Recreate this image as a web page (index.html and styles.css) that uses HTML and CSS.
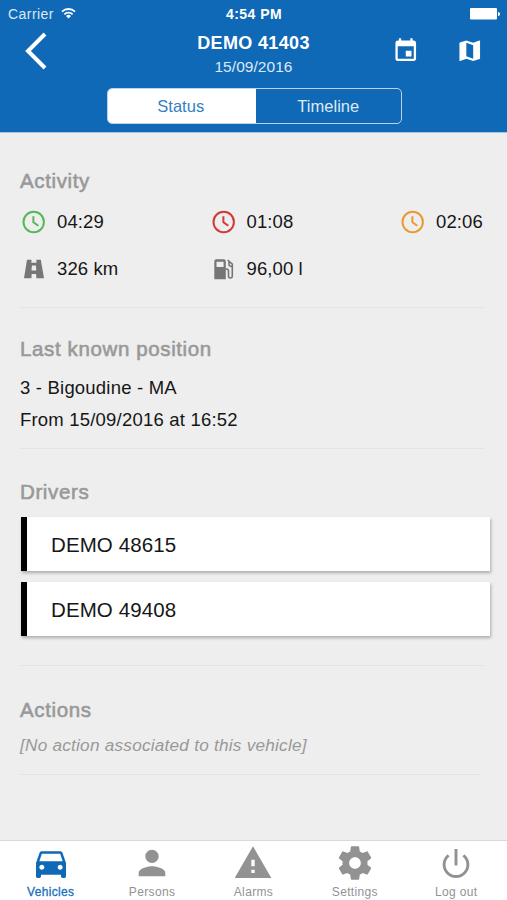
FILE: index.html
```html
<!DOCTYPE html>
<html lang="en">
<head>
<meta charset="utf-8">
<title>Vehicle status</title>
<link rel="stylesheet" href="styles.css">
</head>
<body>
<div class="app">
  <header class="header">
    <div class="statusbar">
      <span class="carrier">Carrier
        <svg class="wifi" viewBox="0 0 16 12"><g fill="none" stroke="#fff" stroke-width="1.9"><path d="M1 4.6a10 10 0 0 1 14 0"/><path d="M3.6 7.4a6.2 6.2 0 0 1 8.8 0"/></g><path fill="#fff" d="M8 11.8 5.3 9.1a3.8 3.8 0 0 1 5.4 0z"/></svg>
      </span>
      <span class="clock">4:54 PM</span>
      <span class="battery"><svg viewBox="0 0 30 12"><rect width="27" height="11.5" rx="1" fill="#fff"/><path fill="#fff" d="M28 4a2 2 0 0 1 0 4z"/></svg></span>
    </div>
    <div class="titlebar">
      <svg class="back" viewBox="0 0 24 38"><path d="M21 2 4 19l17 17" fill="none" stroke="#fff" stroke-width="4"/></svg>
      <div class="titles">
        <h1 class="title">DEMO 41403</h1>
        <div class="date">15/09/2016</div>
      </div>
      <div class="tools">
        <svg viewBox="0 0 24 24"><path d="M17 12h-5v5h5v-5zM16 1v2H8V1H6v2H5c-1.110 0-1.990.9-1.990 2L3 19c0 1.100.89 2 2 2h14c1.100 0 2-.9 2-2V5c0-1.100-.9-2-2-2h-1V1h-2zm3 18H5V8h14v11z"/></svg>
        <svg viewBox="0 0 24 24"><path d="M20.500 3l-.16.030L15 5.100 9 3 3.360 4.900c-.21.070-.36.250-.36.480V20.500c0 .28.220.5.500.5l.16-.03L9 18.900l6 2.100 5.640-1.900c.21-.07.360-.25.360-.48V3.500c0-.28-.22-.5-.5-.5zM15 19l-6-2.110V5l6 2.110V19z"/></svg>
      </div>
    </div>
    <div class="segments">
      <div class="segment active">Status</div>
      <div class="segment">Timeline</div>
    </div>
  </header>

  <main class="content">
    <section class="section activity">
      <h2>Activity</h2>
      <div class="metrics">
        <div class="metric green"><svg viewBox="0 0 28 28"><circle cx="13.700" cy="14" r="10.200"/><path d="M13.400 8.300v5.900l4.900 3.600"/></svg>04:29</div>
        <div class="metric red"><svg viewBox="0 0 28 28"><circle cx="13.700" cy="14" r="10.200"/><path d="M13.400 8.300v5.900l4.900 3.600"/></svg>01:08</div>
        <div class="metric orange"><svg viewBox="0 0 28 28"><circle cx="13.700" cy="14" r="10.200"/><path d="M13.400 8.300v5.900l4.900 3.600"/></svg>02:06</div>
        <div class="metric solid"><svg viewBox="0 0 28 28"><path fill-rule="evenodd" d="M7 4.800h4.500l-.2 3h5.200l-.2-3h4.500L24 23.200h-7.600l-.3-4.200h-4.400l-.3 4.200H4zM11.900 10.500l-.4 5h4.800l-.4-5z"/></svg>326 km</div>
        <div class="metric solid"><svg viewBox="0 0 28 28"><path fill-rule="evenodd" d="M6.200 4.300h7.600q2 0 2 2v17.900H4.300V6.300q0-2 1.900-2zm.3 2.500v5.200h7.100V6.800z"/><path fill="none" stroke="#767676" stroke-width="1.600" d="M15.500 14h1q2 0 2 2v5q0 2 1.900 2t1.900-2V9.200L17.700 5M19 6.500v3q0 2 3.200 2"/></svg>96,00 l</div>
      </div>
    </section>
    <section class="section position">
      <h2>Last known position</h2>
      <p>3 - Bigoudine - MA</p>
      <p>From 15/09/2016 at 16:52</p>
    </section>
    <section class="section drivers">
      <h2>Drivers</h2>
      <div class="driver">DEMO 48615</div>
      <div class="driver">DEMO 49408</div>
    </section>
    <section class="section actions">
      <h2>Actions</h2>
      <p class="empty">[No action associated to this vehicle]</p>
    </section>
  </main>

  <nav class="tabs">
    <div class="tab current"><svg viewBox="0 0 24 24"><path d="M18.920 6.010C18.720 5.420 18.160 5 17.500 5h-11c-.66 0-1.210.42-1.420 1.010L3 12v8c0 .55.450 1 1 1h1c.55 0 1-.45 1-1v-1h12v1c0 .55.450 1 1 1h1c.55 0 1-.45 1-1v-8l-2.080-5.990zM6.500 16c-.83 0-1.500-.67-1.500-1.500S5.670 13 6.500 13s1.500.67 1.500 1.500S7.330 16 6.500 16zm11 0c-.83 0-1.500-.67-1.500-1.500s.67-1.500 1.500-1.500 1.500.67 1.500 1.500-.67 1.500-1.500 1.500zM5 11l1.500-4.500h11L19 11H5z"/></svg><span>Vehicles</span></div>
    <div class="tab"><svg viewBox="0 0 24 24"><path d="M12 12c2.210 0 4-1.790 4-4s-1.790-4-4-4-4 1.790-4 4 1.790 4 4 4zm0 2c-2.670 0-8 1.340-8 4v2h16v-2c0-2.660-5.330-4-8-4z"/></svg><span>Persons</span></div>
    <div class="tab"><svg viewBox="0 0 24 24"><path d="M1 21h22L12 2 1 21zm12-3h-2v-2h2v2zm0-4h-2v-4h2v4z"/></svg><span>Alarms</span></div>
    <div class="tab"><svg viewBox="0 0 24 24"><path d="M19.430 12.980c.04-.32.070-.64.070-.98s-.03-.66-.07-.98l2.110-1.650c.19-.15.240-.42.120-.64l-2-3.460c-.12-.22-.39-.3-.61-.22l-2.490 1c-.52-.4-1.080-.73-1.690-.98l-.38-2.650C14.460 2.180 14.250 2 14 2h-4c-.25 0-.46.180-.49.420l-.38 2.650c-.61.250-1.170.59-1.690.98l-2.490-1c-.23-.09-.49 0-.61.220l-2 3.460c-.13.220-.07.490.12.640l2.110 1.650c-.04.320-.07.650-.07.980s.03.660.070.980l-2.110 1.650c-.19.150-.24.420-.12.640l2 3.460c.12.220.39.300.61.220l2.490-1c.52.400 1.080.73 1.690.98l.38 2.650c.03.240.24.420.49.420h4c.25 0 .46-.18.490-.42l.38-2.650c.61-.25 1.170-.59 1.690-.98l2.490 1c.23.090.49 0 .61-.22l2-3.460c.12-.22.070-.49-.12-.64l-2.110-1.650zM12 15.500c-1.930 0-3.500-1.570-3.500-3.500s1.570-3.500 3.500-3.500 3.500 1.570 3.500 3.500-1.570 3.500-3.500 3.500z"/></svg><span>Settings</span></div>
    <div class="tab"><svg viewBox="0 0 40 40"><path fill="none" stroke="#929292" stroke-width="2.900" d="M20 6V22.500M12.600 12.300a11.900 11.900 0 1 0 14.800 0"/></svg><span>Log out</span></div>
  </nav>
</div>
</body>
</html>
```
FILE: styles.css
```css
* { box-sizing: border-box; margin: 0; padding: 0; }
body { font-family: "Liberation Sans", Arial, sans-serif; color: #161616; background: #eee; }
svg { display: block; flex: none; }
.app { display: flex; flex-direction: column; width: 507px; height: 900px; overflow: hidden; background: #eee; }

.header { height: 133px; background: #0f69b6; color: #fff; border-bottom: 1px solid #a5c6e2; flex: none; }
.statusbar { display: grid; grid-template-columns: 1fr auto 1fr; align-items: center; height: 28px; padding: 0 7px 0 8px; font-size: 14px; letter-spacing: 0.45px; }
.carrier { display: flex; align-items: center; gap: 7px; color: #dce9f5; }
.wifi { width: 15px; height: 12px; margin-top: -3px; }
.clock { font-weight: bold; }
.battery { justify-self: end; }
.battery svg { width: 30px; height: 12px; }
.titlebar { display: grid; grid-template-columns: 1fr auto 1fr; height: 60px; padding: 0 24px; }
.back { width: 24px; height: 38px; margin-top: 4px; }
.titles { text-align: center; }
.title { font-size: 18px; line-height: 22px; margin-top: 4px; letter-spacing: 0.35px; }
.date { font-size: 15.500px; line-height: 20px; margin-top: 3px; letter-spacing: 0.05px; color: #dce9f5; }
.tools { display: flex; justify-content: flex-end; gap: 36px; padding-top: 9px; }
.tools svg { width: 27.500px; height: 27.500px; fill: #fff; }
.segments { display: flex; width: 295px; height: 36px; margin: 0 0 0 107px; border: 1.500px solid #b9d3ea; border-radius: 5px; overflow: hidden; }
.segment { flex: 1; text-align: center; font-size: 16.500px; line-height: 35px; letter-spacing: 0.05px; color: #dce9f5; }
.segment.active { background: #fff; color: #337fc1; padding-right: 2px; }

.content { flex: 1; padding: 0 16px 0 20px; }
.section { border-bottom: 1px solid #e4e4e4; margin-right: 7px; }
h2 { font-size: 20.500px; line-height: 23px; font-weight: normal; letter-spacing: 0.62px; color: #999; -webkit-text-stroke: 0.600px #999; }
.activity { height: 175px; padding-top: 36px; }
.metrics { display: grid; grid-template-columns: repeat(3, 189.500px); grid-auto-rows: 46.500px; margin-top: 7px; }
.metric { display: flex; align-items: center; gap: 9px; font-size: 18.500px; letter-spacing: 0.1px; white-space: nowrap; }
.metric svg { width: 28px; height: 28px; fill: none; stroke-width: 2; }
.green svg { stroke: #57b75b; }
.red svg { stroke: #d13a36; }
.orange svg { stroke: #ea9a35; }
.solid svg { fill: #767676; }
.position { height: 141px; padding-top: 29px; }
.position p { font-size: 18.500px; line-height: 32px; letter-spacing: 0.2px; }
.position h2 { margin-bottom: 12px; }
.drivers { height: 217px; padding-top: 31px; }
.drivers h2 { margin-bottom: 14px; }
.driver { width: 469px; height: 54px; margin: 0 0 11px 1px; padding-left: 24px; border-left: 6px solid #000; background: #fff; box-shadow: 1px 2px 3px rgba(0, 0, 0, .28); font-size: 20.500px; line-height: 55px; letter-spacing: 0.1px; }
.actions { height: 109px; padding-top: 32px; margin-right: 11px; }
.empty { margin-top: 14px; font-size: 17.200px; line-height: 20px; font-style: italic; letter-spacing: 0.23px; color: #999; white-space: nowrap; }

.tabs { display: grid; grid-template-columns: repeat(5, 1fr); height: 60px; flex: none; background: #fff; border-top: 1px solid #dadada; }
.tab { display: flex; flex-direction: column; align-items: center; padding-top: 2px; color: #929292; font-size: 12px; line-height: 14px; letter-spacing: 0.350px; }
.tab svg { width: 40px; height: 40px; fill: #929292; margin-bottom: 2px; }
.current { color: #1c70b9; }
.current span { -webkit-text-stroke: 0.300px #1c70b9; }
.current svg { fill: #0f69b6; }
```
